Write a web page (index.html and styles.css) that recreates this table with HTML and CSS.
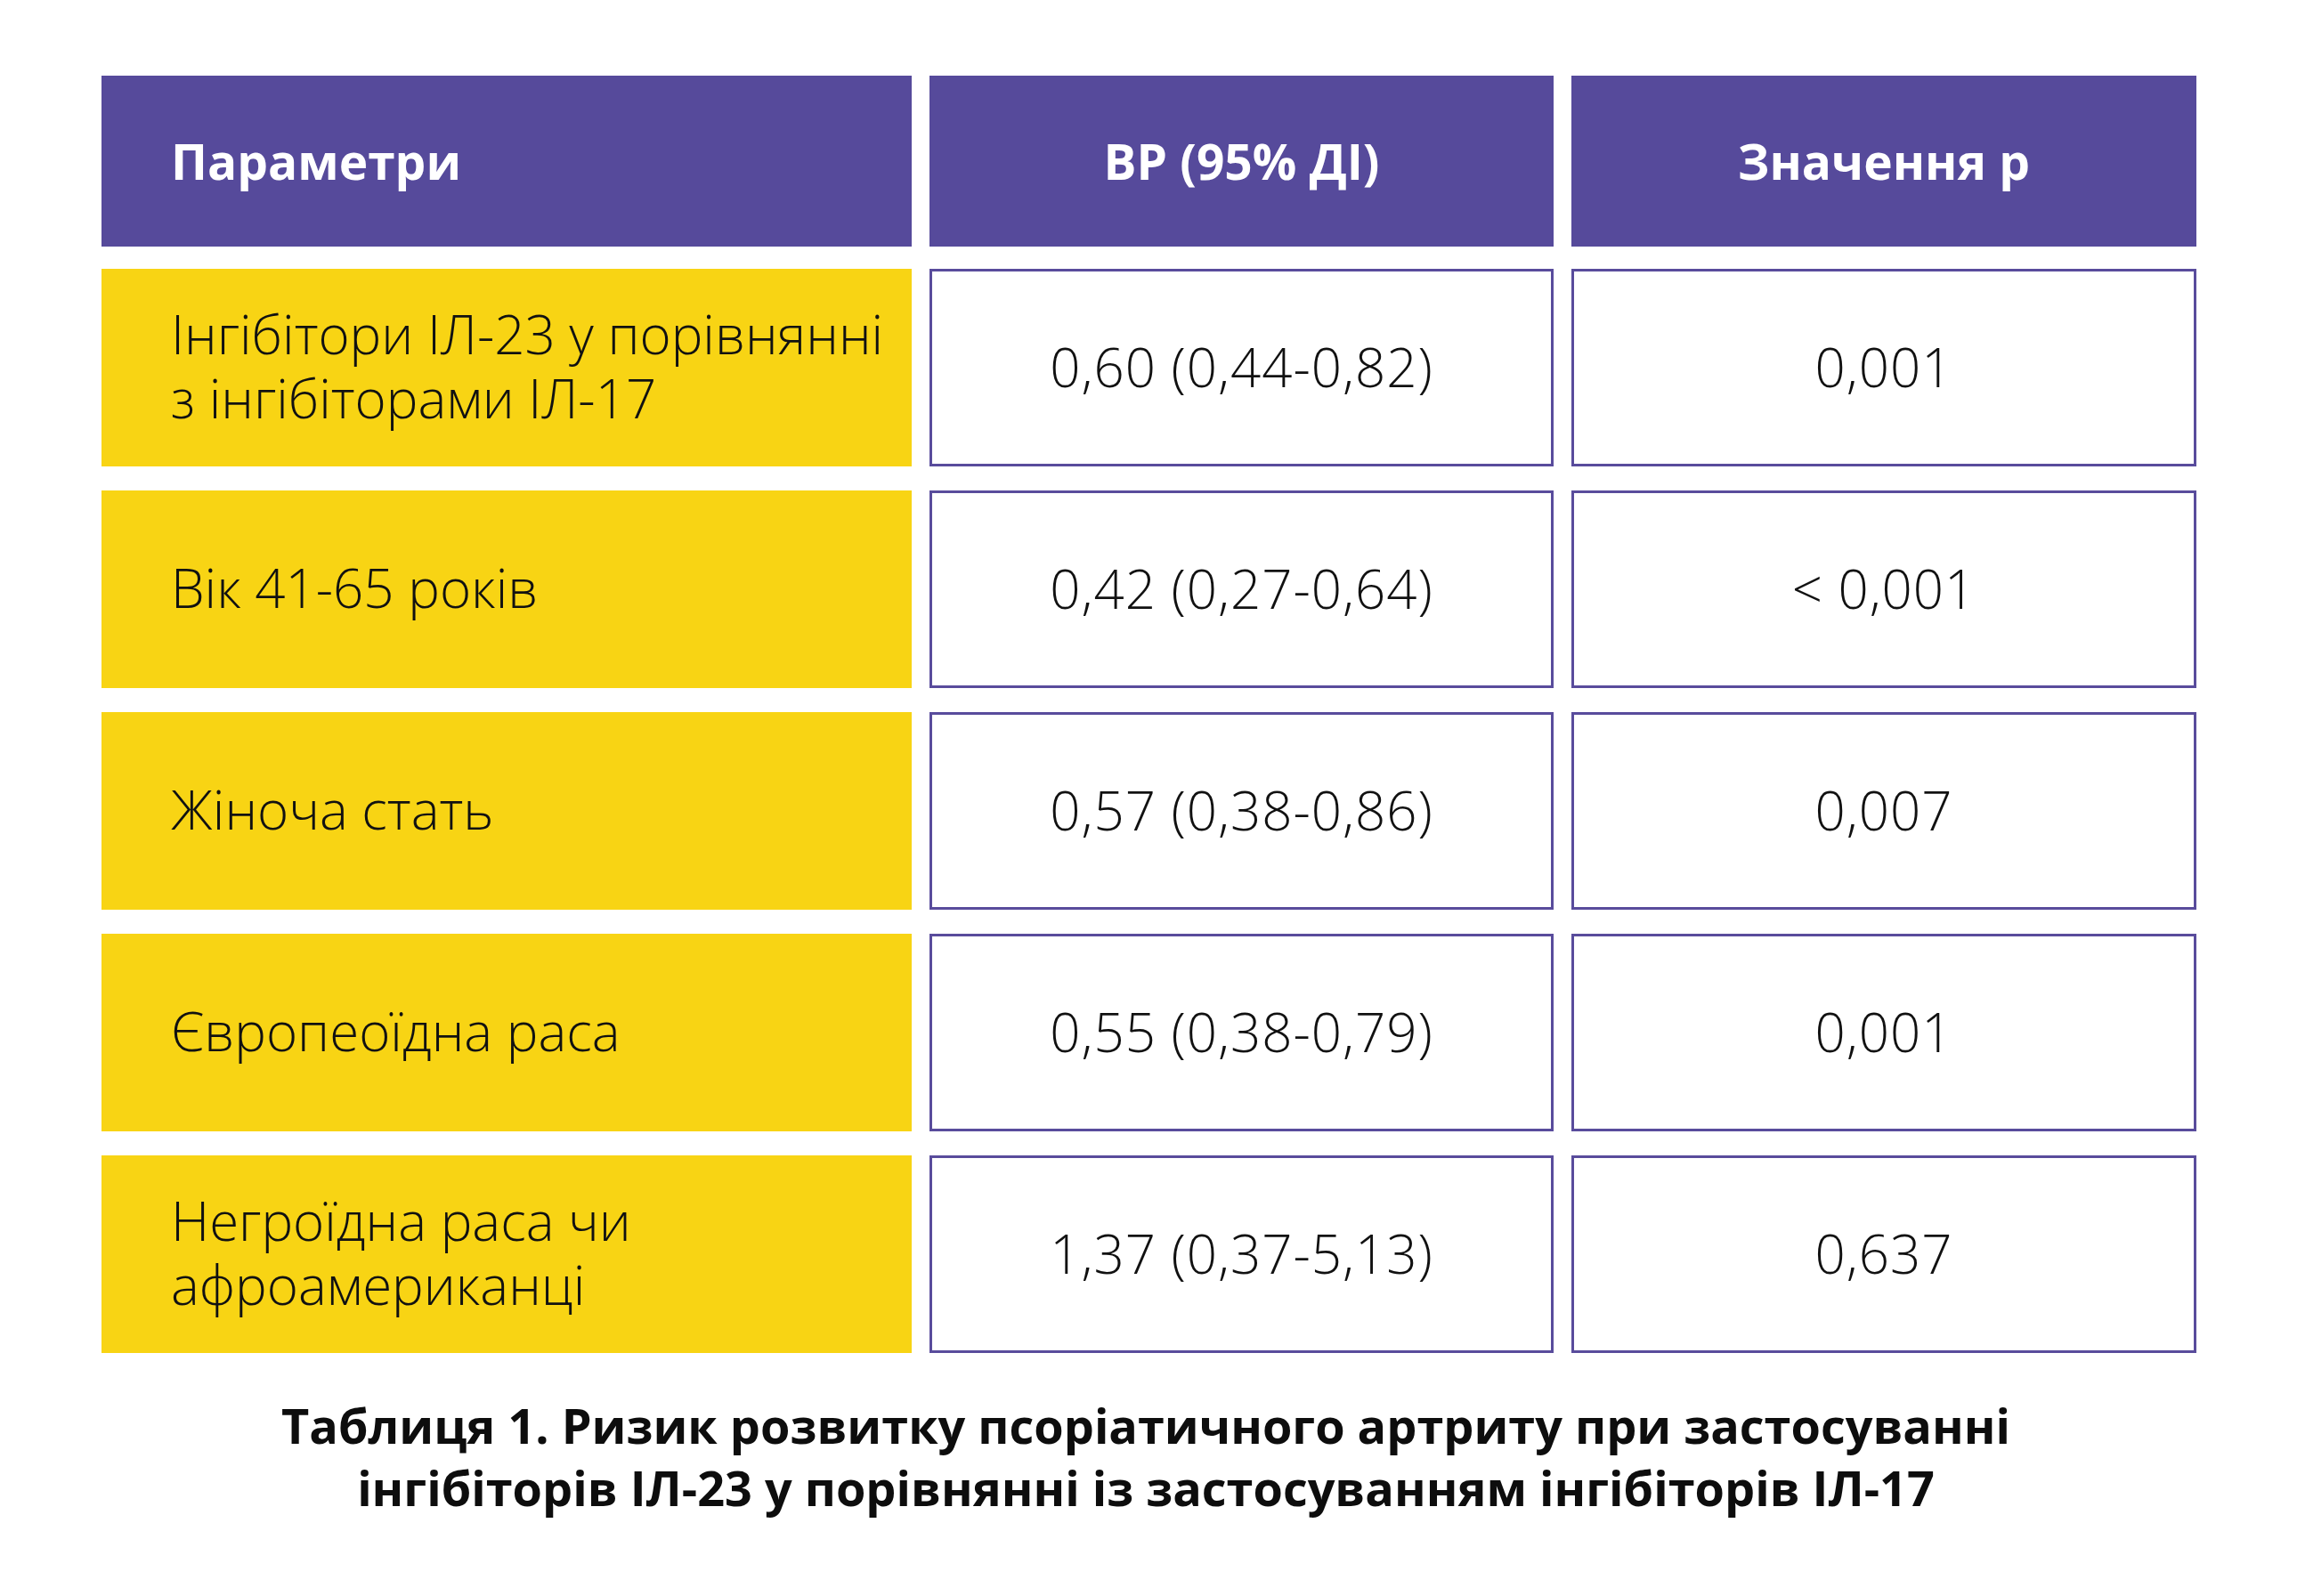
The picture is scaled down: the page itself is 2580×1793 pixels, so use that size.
FILE: index.html
```html
<!DOCTYPE html>
<html lang="uk">
<head>
<meta charset="utf-8">
<title>Таблиця 1</title>
<link rel="stylesheet" href="styles.css">
</head>
<body>
<main class="page">
  <section class="table">
    <div class="row head">
      <div class="cell h left">Параметри</div>
      <div class="cell h">ВР (95% ДІ)</div>
      <div class="cell h">Значення р</div>
    </div>
    <div class="rows">
      <div class="row">
        <div class="cell param">Інгібітори ІЛ-23 у порівнянні<br>з інгібіторами ІЛ-17</div>
        <div class="cell val">0,60 (0,44-0,82)</div>
        <div class="cell val">0,001</div>
      </div>
      <div class="row">
        <div class="cell param">Вік 41-65 років</div>
        <div class="cell val">0,42 (0,27-0,64)</div>
        <div class="cell val">&lt; 0,001</div>
      </div>
      <div class="row">
        <div class="cell param">Жіноча стать</div>
        <div class="cell val">0,57 (0,38-0,86)</div>
        <div class="cell val">0,007</div>
      </div>
      <div class="row">
        <div class="cell param">Європеоїдна раса</div>
        <div class="cell val">0,55 (0,38-0,79)</div>
        <div class="cell val">0,001</div>
      </div>
      <div class="row">
        <div class="cell param">Негроїдна раса чи<br>афроамериканці</div>
        <div class="cell val">1,37 (0,37-5,13)</div>
        <div class="cell val">0,637</div>
      </div>
    </div>
  </section>
  <p class="caption">Таблиця 1. Ризик розвитку псоріатичного артриту при застосуванні<br>інгібіторів ІЛ-23 у порівнянні із застосуванням інгібіторів ІЛ-17</p>
</main>
</body>
</html>
```
FILE: styles.css
```css
html, body {
  margin: 0;
  padding: 0;
  background: #ffffff;
}
body {
  font-family: "Open Sans", "Noto Sans", sans-serif;
  color: #111111;
}
.page {
  width: 2580px;
  padding: 85px 0 0 114px;
  box-sizing: border-box;
}
.table {
  width: 2353px;
  display: flex;
  flex-direction: column;
}
.row {
  display: grid;
  grid-template-columns: 910px 701px 702px;
  column-gap: 20px;
  height: 222px;
}
.row.head {
  height: 192px;
  margin-bottom: 25px;
}
.rows {
  display: flex;
  flex-direction: column;
  gap: 27px;
}
.cell {
  display: flex;
  align-items: center;
  justify-content: center;
  box-sizing: border-box;
  text-align: center;
}
.cell.h {
  background: #564a9b;
  color: #ffffff;
  font-size: 55px;
  font-weight: 700;
  padding-bottom: 2px;
}
.cell.h.left {
  justify-content: flex-start;
  padding-left: 78px;
}
.cell.param {
  background: #f8d414;
  justify-content: flex-start;
  text-align: left;
  padding-left: 78px;
  font-size: 60px;
  font-weight: 300;
  line-height: 72px;
  padding-bottom: 4px;
}
.cell.val {
  border: 3px solid #594c9c;
  background: #ffffff;
  font-size: 60px;
  font-weight: 300;
  letter-spacing: 1px;
  padding-bottom: 2px;
}
.caption {
  margin: 46px 0 0 0;
  width: 2346px;
  text-align: center;
  font-size: 54px;
  font-weight: 700;
  line-height: 70px;
  color: #0d0d0d;
}
```
